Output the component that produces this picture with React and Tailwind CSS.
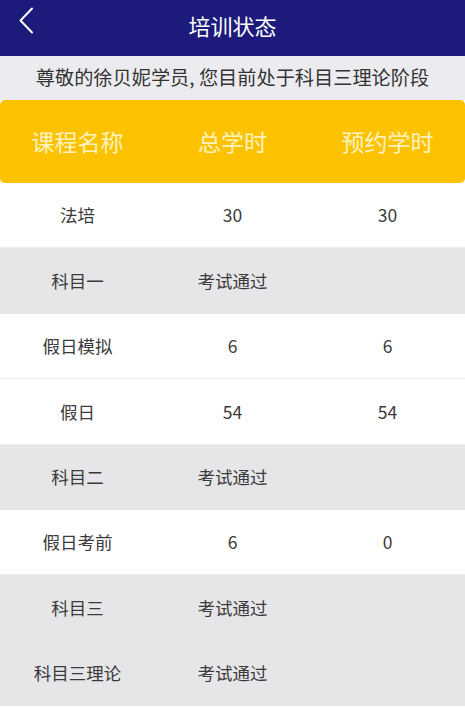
import React from "react";

const rows = [
  { name: "法培", total: "30", booked: "30", gray: false },
  { name: "科目一", total: "考试通过", booked: "", gray: true },
  { name: "假日模拟", total: "6", booked: "6", gray: false },
  { name: "假日", total: "54", booked: "54", gray: false },
  { name: "科目二", total: "考试通过", booked: "", gray: true },
  { name: "假日考前", total: "6", booked: "0", gray: false },
  { name: "科目三", total: "考试通过", booked: "", gray: true },
  { name: "科目三理论", total: "考试通过", booked: "", gray: true },
];

const font = { fontFamily: '"Noto Sans CJK SC", "Noto Sans", sans-serif' };

export default function App() {
  return (
    <div className="w-[465px] h-[708px] overflow-hidden bg-white" style={font}>
      <div className="relative h-[56px] bg-[#1c1a7b] flex items-center justify-center">
        <svg className="absolute left-[17px] top-[7px]" width="20" height="27" viewBox="0 0 20 27">
          <path d="M15 1.5 L3.5 13.5 L15 25.5" fill="none" stroke="#ffffff" strokeWidth="2" strokeLinecap="round" strokeLinejoin="round" />
        </svg>
        <span className="text-[22px] text-white leading-none -mt-[6px]">培训状态</span>
      </div>
      <div className="h-[44px] bg-[#ececf0] flex items-center justify-center">
        <span className="text-[19.2px] text-[#333333] leading-none">尊敬的徐贝妮学员, 您目前处于科目三理论阶段</span>
      </div>
      <div className="h-[83px] bg-[#fcc200] rounded-[5px] grid grid-cols-3 items-center text-[23px] text-[#fff2c0] leading-none shadow-[0_1px_2px_rgba(0,0,0,0.08)]">
        <div className="text-center">课程名称</div>
        <div className="text-center">总学时</div>
        <div className="text-center">预约学时</div>
      </div>
      {rows.map((r, i) => (
        <div
          key={i}
          className={
            "h-[65.4px] grid grid-cols-3 items-center text-[17.5px] text-[#3a3a3a] leading-none border-b " +
            (r.gray ? "bg-[#e6e6e9] border-[#e6e6e9]" : "bg-white border-[#ececee]")
          }
        >
          <div className="text-center">{r.name}</div>
          <div className="text-center">{r.total}</div>
          <div className="text-center">{r.booked}</div>
        </div>
      ))}
    </div>
  );
}
